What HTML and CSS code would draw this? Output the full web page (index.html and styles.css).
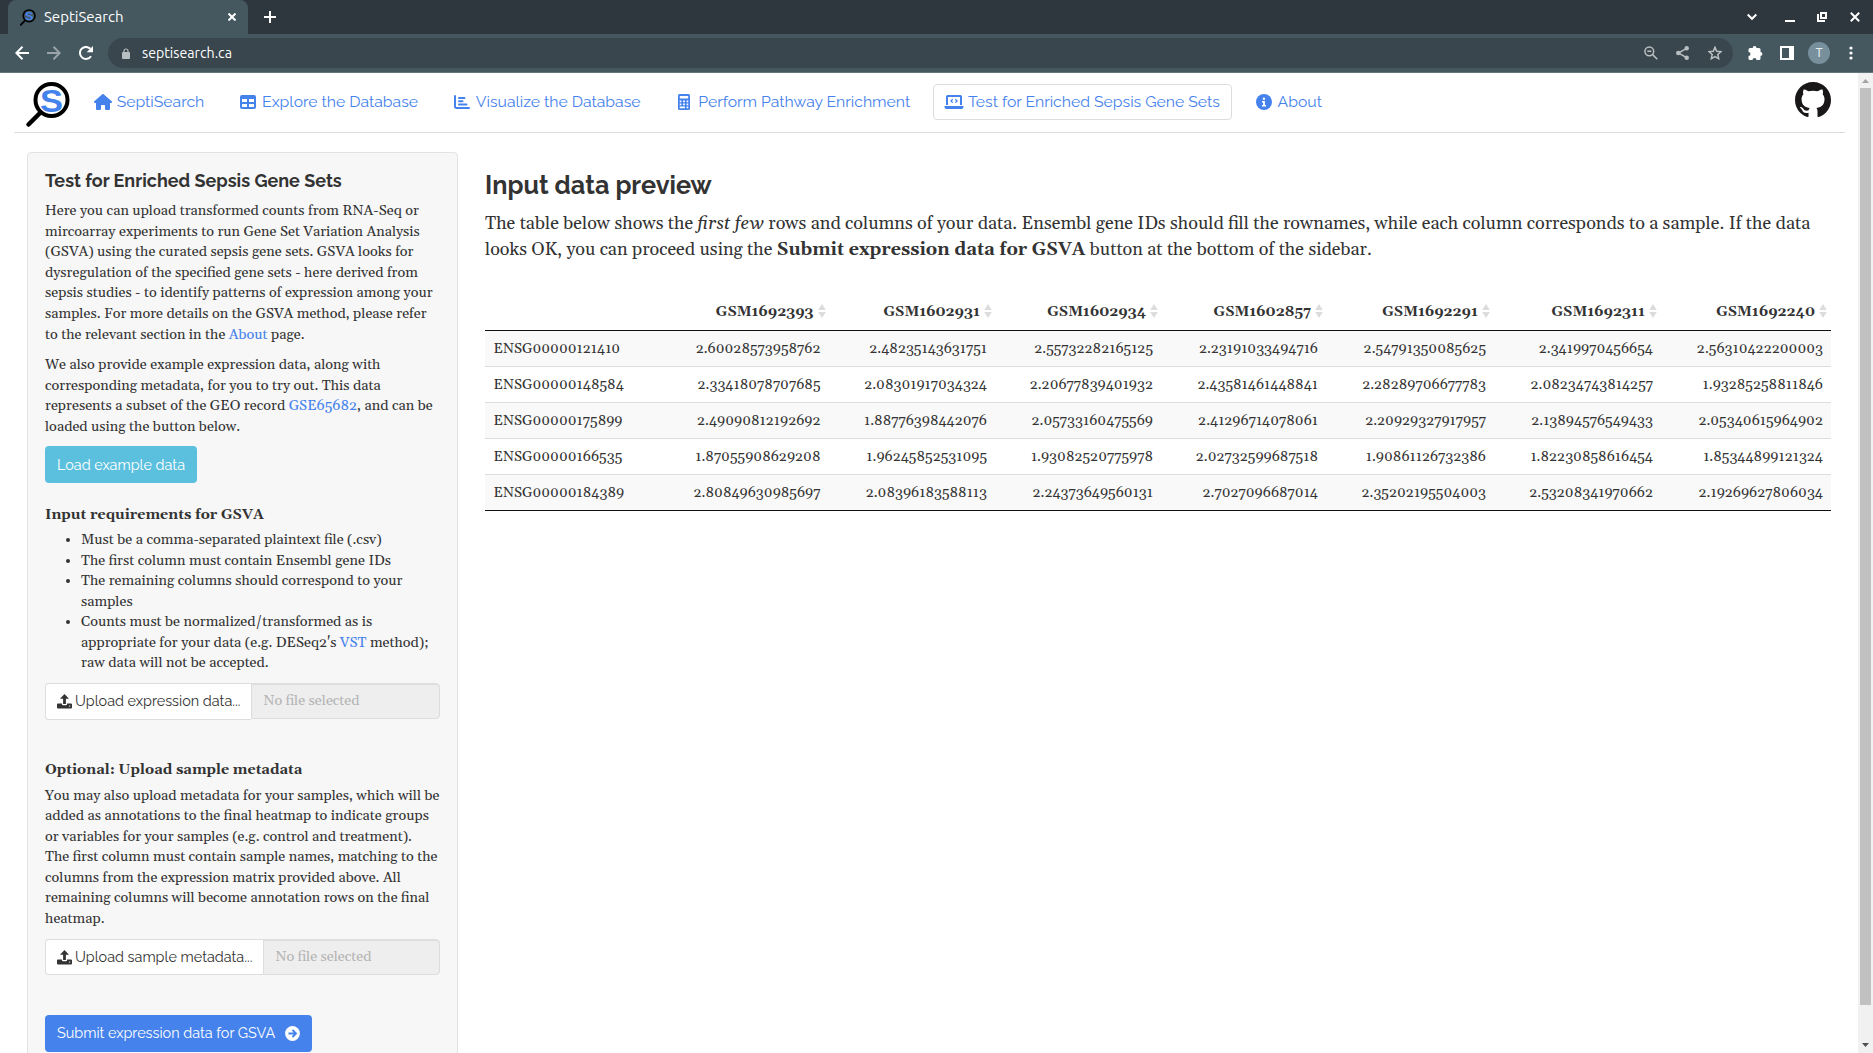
FILE: index.html
```html
<!DOCTYPE html>
<html lang="en">
<head>
<meta charset="utf-8">
<title>SeptiSearch</title>
<link rel="stylesheet" href="styles.css">
</head>
<body>
<svg class="defs" width="0" height="0">
  <symbol id="upload" viewBox="0 0 15 15">
    <path d="M7.500 0L12 4.700H8.900V10H6.100V4.700H3z"/>
    <path d="M1 9.500H5V10.200A1 1 0 0 0 6 11.200H9A1 1 0 0 0 10 10.200V9.500H14A1 1 0 0 1 15 10.500V13.500A1 1 0 0 1 14 14.500H1A1 1 0 0 1 0 13.500V10.500A1 1 0 0 1 1 9.500zM12.700 11.400A.7 .7 0 1 0 12.700 12.800A.7 .7 0 1 0 12.700 11.400z" fill-rule="evenodd"/>
  </symbol>
  <symbol id="sort" viewBox="0 0 8 14"><path d="M4 0L7.800 6H.2zM4 14L7.800 8H.2z" fill="#dcdcdc"/></symbol>
</svg>

<div class="tabstrip">
  <div class="tab">
    <svg class="favicon" width="16" height="17" viewBox="0 0 44 46">
      <path d="M13.500 31.500L2 43.500" stroke="#000" stroke-width="5" stroke-linecap="round"/>
      <circle cx="25" cy="18.500" r="16.200" fill="none" stroke="#000" stroke-width="4.500"/>
      <text x="25" y="30" text-anchor="middle" class="logo-letter" textLength="23" lengthAdjust="spacingAndGlyphs">S</text>
    </svg>
    <span class="tab-title">SeptiSearch</span>
    <svg class="tab-close" width="8" height="8" viewBox="0 0 8 8"><path d="M.5 .5L7.500 7.500M7.500 .5L.5 7.500"/></svg>
  </div>
  <svg class="new-tab" width="12" height="12" viewBox="0 0 12 12"><path d="M6 0V12M0 6H12"/></svg>
  <div class="window-controls">
    <svg width="10" height="10" viewBox="0 0 10 10"><path d="M.7 2.500L5 6.800L9.300 2.500"/></svg>
    <svg class="minimize" width="10" height="10" viewBox="0 0 10 10"><path d="M0 9H10"/></svg>
    <svg width="10" height="10" viewBox="0 0 10 10"><path d="M4 1H9V6H4zM1 2V9H8"/></svg>
    <svg width="10" height="10" viewBox="0 0 10 10"><path d="M.8 .8L9.200 9.200M9.200 .8L.8 9.200"/></svg>
  </div>
</div>

<div class="toolbar">
  <div class="nav-buttons">
    <svg width="14" height="14" viewBox="0 0 14 14"><path d="M14 7H1.500M7.500 .8L1.300 7L7.500 13.200"/></svg>
    <svg class="dim" width="14" height="14" viewBox="0 0 14 14"><path d="M0 7H12.500M6.500 .8L12.700 7L6.500 13.200"/></svg>
    <svg width="14" height="14" viewBox="0 0 14 14"><path d="M12 10.200A6 6 0 1 1 11.300 2.800"/><path d="M14 0V6.300H7.700z" class="solid"/></svg>
  </div>
  <div class="address">
    <svg width="8" height="11" viewBox="0 0 8 11"><path d="M2 5V3A2 2 0 0 1 6 3V5" fill="none" stroke="#b9bec1" stroke-width="1.200"/><rect y="4" width="8" height="7" rx="1" fill="#b9bec1"/></svg>
    <span class="url">septisearch.ca</span>
    <div class="address-actions">
      <svg class="zoom-out" width="14" height="14" viewBox="0 0 14 14"><circle cx="5.300" cy="5.300" r="4.400"/><path d="M8.600 8.600L13.300 13.300M3.300 5.300H7.300"/></svg>
      <svg width="13" height="14" viewBox="0 0 13 14"><path d="M10.500 2.300L2.500 7L10.500 11.700"/><circle cx="10.700" cy="2.300" r="1.500" class="dot"/><circle cx="2.300" cy="7" r="1.500" class="dot"/><circle cx="10.700" cy="11.700" r="1.500" class="dot"/></svg>
      <svg width="14" height="14" viewBox="0 0 14 14"><path d="M7 1.200L8.700 5.200L13 5.600L9.800 8.500L10.700 12.700L7 10.500L3.300 12.700L4.200 8.500L1 5.600L5.300 5.200z"/></svg>
    </div>
  </div>
  <div class="extensions">
    <svg width="15" height="15" viewBox="0 0 15 15" fill="#fff"><path d="M4.200 2.500A1.900 1.900 0 0 1 8 2.500H10.500A1.500 1.500 0 0 1 12 4V6.500A1.900 1.900 0 0 1 12 10.300V13A1.500 1.500 0 0 1 10.500 14.500H8A2 2 0 0 0 4 14.500H1.500A1.500 1.500 0 0 1 0 13V10.500A2 2 0 0 0 0 6.500V4A1.500 1.500 0 0 1 1.500 2.500z" transform="translate(.5 -.5)"/></svg>
    <svg width="14" height="14" viewBox="0 0 14 14" fill="#fff"><path d="M0 0H14V14H0zM2 2V12H9V2z" fill-rule="evenodd"/></svg>
    <span class="avatar">T</span>
    <svg width="4" height="14" viewBox="0 0 4 14" fill="#fff"><circle cx="2" cy="2" r="1.600"/><circle cx="2" cy="7" r="1.600"/><circle cx="2" cy="12" r="1.600"/></svg>
  </div>
</div>

<div class="viewport">
  <div class="page">
    <nav class="navbar">
      <svg class="brand" width="44" height="46" viewBox="0 0 44 46">
        <path d="M14 31L2.500 42.500" stroke="#000" stroke-width="4.500" stroke-linecap="round"/>
        <circle cx="25.500" cy="18" r="16" fill="#fff" stroke="#000" stroke-width="4"/>
        <text x="25.500" y="29.500" text-anchor="middle" class="logo-letter" textLength="23" lengthAdjust="spacingAndGlyphs">S</text>
      </svg>
      <a class="nav-item"><svg class="nav-icon" width="18" height="16" viewBox="0 0 576 512"><path d="M575.8 255.500c0 18-15 32.100-32 32.100h-32l.7 160.200c0 2.700-.2 5.400-.5 8.100V472c0 22.100-17.900 40-40 40H392c-22.100 0-40-17.900-40-40V384c0-17.700-14.300-32-32-32H256c-17.700 0-32 14.300-32 32v88c0 22.100-17.900 40-40 40H104c-22.100 0-40-17.900-40-40V287.600H32c-18 0-32-14-32-32.100c0-9 3-17 10-24L266.400 8c7-7 15-8 22-8s15 2 21 7L564.800 231.500c8 7 12 15 11 24z"/></svg><span>SeptiSearch</span></a>
      <a class="nav-item"><svg class="nav-icon" width="16" height="16" viewBox="0 0 16 16"><path d="M2 1H14A2 2 0 0 1 16 3V13A2 2 0 0 1 14 15H2A2 2 0 0 1 0 13V3A2 2 0 0 1 2 1zM2 5V8H7V5zM9 5V8H14V5zM2 10V13H7V10zM9 10V13H14V10z" fill-rule="evenodd"/></svg><span>Explore the Database</span></a>
      <a class="nav-item"><svg class="nav-icon" width="16" height="16" viewBox="0 0 16 16"><path d="M1 2V12.500A1.500 1.500 0 0 0 2.500 14H15M5 4H10.500M5 7.200H8.500M5 10.400H12.500" fill="none" stroke="#4582ec" stroke-width="2" stroke-linecap="round"/></svg><span>Visualize the Database</span></a>
      <a class="nav-item"><svg class="nav-icon" width="12" height="16" viewBox="0 0 12 16"><path d="M1.500 0H10.500A1.500 1.500 0 0 1 12 1.500V14.500A1.500 1.500 0 0 1 10.500 16H1.500A1.500 1.500 0 0 1 0 14.500V1.500A1.500 1.500 0 0 1 1.500 0zM1.800 2V4.600H10.200V2zM1.700 6.600V8.300H3.400V6.600zM5.100 6.600V8.300H6.900V6.600zM8.600 6.600V8.300H10.300V6.600zM1.700 9.600V11.300H3.400V9.600zM5.100 9.600V11.300H6.900V9.600zM8.600 9.600V11.300H10.300V9.600zM1.700 12.600V14.200H6.900V12.600zM8.600 12.600V14.200H10.300V12.600z" fill-rule="evenodd"/></svg><span>Perform Pathway Enrichment</span></a>
      <a class="nav-item active"><svg class="nav-icon" width="20" height="16" viewBox="0 0 20 16"><path d="M3 11V2.500A.8 .8 0 0 1 3.800 2H16.200A.8 .8 0 0 1 17 2.500V11" fill="none" stroke="#4582ec" stroke-width="2"/><path d="M.5 12H19.500V13A2 2 0 0 1 17.500 15H2.500A2 2 0 0 1 .5 13z"/><path d="M8.700 5.200L7 6.900L8.700 8.600M11.300 5.200L13 6.900L11.300 8.600" fill="none" stroke="#4582ec" stroke-width="1.300"/></svg><span>Test for Enriched Sepsis Gene Sets</span></a>
      <a class="nav-item"><svg class="nav-icon" width="16" height="16" viewBox="0 0 16 16"><circle cx="8" cy="8" r="8"/><circle cx="8" cy="4.800" r="1.200" fill="#fff"/><path d="M6 7H8.900V11H10V12.400H6V11H7.100V8.400H6z" fill="#fff"/></svg><span>About</span></a>
      <svg class="github" width="36" height="36" viewBox="0 0 16 16" fill="#191717"><path d="M8 0C3.580 0 0 3.580 0 8c0 3.540 2.290 6.530 5.470 7.590.4.070.55-.17.55-.38 0-.19-.01-.82-.01-1.490-2.010.37-2.530-.49-2.690-.94-.09-.23-.48-.94-.82-1.130-.28-.15-.68-.52-.01-.53.63-.01 1.080.58 1.230.82.72 1.210 1.870.87 2.330.66.07-.52.28-.87.51-1.070-1.780-.2-3.640-.89-3.640-3.950 0-.87.31-1.590.82-2.150-.08-.2-.36-1.020.08-2.120 0 0 .67-.21 2.200.82.64-.18 1.320-.27 2-.27s1.360.09 2 .27c1.530-1.040 2.200-.82 2.200-.82.44 1.100.16 1.920.08 2.120.51.56.82 1.270.82 2.150 0 3.070-1.870 3.750-3.650 3.950.29.25.54.73.54 1.480 0 1.070-.01 1.930-.01 2.200 0 .21.15.46.55.38A8.010 8.010 0 0 0 16 8c0-4.420-3.580-8-8-8z"/></svg>
    </nav>

    <div class="layout">
      <aside class="sidebar">
        <h4>Test for Enriched Sepsis Gene Sets</h4>
        <p>Here you can upload transformed counts from RNA-Seq or mircoarray experiments to run Gene Set Variation Analysis (GSVA) using the curated sepsis gene sets. GSVA looks for dysregulation of the specified gene sets - here derived from sepsis studies - to identify patterns of expression among your samples. For more details on the GSVA method, please refer to the relevant section in the <a>About</a> page.</p>
        <p>We also provide example expression data, along with corresponding metadata, for you to try out. This data represents a subset of the GEO record <a>GSE65682</a>, and can be loaded using the button below.</p>
        <button class="btn btn-info">Load example data</button>
        <div class="field-title">Input requirements for GSVA</div>
        <ul>
          <li>Must be a comma-separated plaintext file (.csv)</li>
          <li>The first column must contain Ensembl gene IDs</li>
          <li>The remaining columns should correspond to your samples</li>
          <li>Counts must be normalized/transformed as is appropriate for your data (e.g. DESeq2's <a>VST</a> method); raw data will not be accepted.</li>
        </ul>
        <div class="upload">
          <span class="upload-btn"><svg width="15" height="15"><use href="#upload"/></svg>Upload expression data...</span>
          <span class="upload-file">No file selected</span>
        </div>
        <div class="field-title">Optional: Upload sample metadata</div>
        <p class="metadata-help">You may also upload metadata for your samples, which will be added as annotations to the final heatmap to indicate groups or variables for your samples (e.g. control and treatment).<br>The first column must contain sample names, matching to the columns from the expression matrix provided above. All remaining columns will become annotation rows on the final heatmap.</p>
        <div class="upload">
          <span class="upload-btn"><svg width="15" height="15"><use href="#upload"/></svg>Upload sample metadata...</span>
          <span class="upload-file">No file selected</span>
        </div>
        <button class="btn btn-primary">Submit expression data for GSVA<svg width="15" height="15" viewBox="0 0 15 15"><circle cx="7.500" cy="7.500" r="7.400" fill="#fff"/><path d="M3.500 7.500H10.500M7.500 4L11 7.500L7.500 11" fill="none" stroke="#4582ec" stroke-width="1.900"/></svg></button>
      </aside>

      <main class="main">
        <h2>Input data preview</h2>
        <p>The table below shows the <em>first few</em> rows and columns of your data. Ensembl gene IDs should fill the rownames, while each column corresponds to a sample. If the data looks OK, you can proceed using the <strong>Submit expression data for GSVA</strong> button at the bottom of the sidebar.</p>
        <table>
          <colgroup><col class="c0"><col class="c1"><col class="c2"><col class="c3"><col class="c4"><col class="c5"><col class="c6"><col class="c7"></colgroup>
          <thead><tr><th></th>
            <th>GSM1692393<svg width="8" height="14"><use href="#sort"/></svg></th>
            <th>GSM1602931<svg width="8" height="14"><use href="#sort"/></svg></th>
            <th>GSM1602934<svg width="8" height="14"><use href="#sort"/></svg></th>
            <th>GSM1602857<svg width="8" height="14"><use href="#sort"/></svg></th>
            <th>GSM1692291<svg width="8" height="14"><use href="#sort"/></svg></th>
            <th>GSM1692311<svg width="8" height="14"><use href="#sort"/></svg></th>
            <th>GSM1692240<svg width="8" height="14"><use href="#sort"/></svg></th>
          </tr></thead>
          <tbody>
            <tr><td>ENSG00000121410</td><td>2.60028573958762</td><td>2.48235143631751</td><td>2.55732282165125</td><td>2.23191033494716</td><td>2.54791350085625</td><td>2.3419970456654</td><td>2.56310422200003</td></tr>
            <tr><td>ENSG00000148584</td><td>2.33418078707685</td><td>2.08301917034324</td><td>2.20677839401932</td><td>2.43581461448841</td><td>2.28289706677783</td><td>2.08234743814257</td><td>1.93285258811846</td></tr>
            <tr><td>ENSG00000175899</td><td>2.49090812192692</td><td>1.88776398442076</td><td>2.05733160475569</td><td>2.41296714078061</td><td>2.20929327917957</td><td>2.13894576549433</td><td>2.05340615964902</td></tr>
            <tr><td>ENSG00000166535</td><td>1.87055908629208</td><td>1.96245852531095</td><td>1.93082520775978</td><td>2.02732599687518</td><td>1.90861126732386</td><td>1.82230858616454</td><td>1.85344899121324</td></tr>
            <tr><td>ENSG00000184389</td><td>2.80849630985697</td><td>2.08396183588113</td><td>2.24373649560131</td><td>2.7027096687014</td><td>2.35202195504003</td><td>2.53208341970662</td><td>2.19269627806034</td></tr>
          </tbody>
        </table>
      </main>
    </div>
  </div>
  <div class="scrollbar">
    <svg width="7" height="4" viewBox="0 0 7 4"><path d="M3.500 0L7 4H0z" fill="#a3a3a3"/></svg>
    <div class="thumb"></div>
    <svg width="7" height="4" viewBox="0 0 7 4"><path d="M3.500 4L7 0H0z" fill="#505050"/></svg>
  </div>
</div>
</body>
</html>
```
FILE: styles.css
```css
* { box-sizing: border-box; }
body {
  margin: 0;
  height: 1053px;
  overflow: hidden;
  display: flex;
  flex-direction: column;
  background: #fff;
  color: #333;
  font: 14.4px/20.57px Gelasio, Georgia, "Liberation Serif", serif;
  font-variant-numeric: oldstyle-nums;
}
svg { flex: none; display: block; }
.defs { position: absolute; }
a { color: #4582ec; text-decoration: none; }
.logo-letter { font: bold 32px "Liberation Sans", sans-serif; fill: #4582ec; }

/* Browser window */
.tabstrip {
  flex: none;
  height: 34px;
  display: flex;
  align-items: center;
  background: #2d373d;
  padding: 0 13px 0 8px;
}
.tab {
  width: 240px;
  height: 34px;
  display: flex;
  align-items: center;
  padding: 0 12px;
  background: #455860;
  border-radius: 8px 8px 0 0;
  color: #fff;
  font: 15px/34px Ubuntu, "Noto Sans", sans-serif;
}
.tab-title { margin-left: 8px; flex: 1; }
.tab-close, .new-tab, .window-controls svg { fill: none; stroke: #fff; stroke-width: 2; }
.new-tab { margin-left: 16px; }
.window-controls { margin-left: auto; display: flex; gap: 23px; }
.window-controls svg:first-child { margin-right: 5px; }
.window-controls .minimize { margin-right: -1px; }
.toolbar {
  flex: none;
  height: 39px;
  display: flex;
  align-items: center;
  background: #455860;
  border-bottom: 1px solid #64757d;
  padding: 0 20px 0 15px;
}
.nav-buttons { display: flex; gap: 18px; fill: none; stroke: #fff; stroke-width: 2; }
.dim { opacity: .45; }
.solid { fill: #fff; stroke: none; }
.address {
  flex: 1;
  height: 30px;
  margin-left: 15px;
  padding: 0 11px 0 14px;
  display: flex;
  align-items: center;
  border-radius: 15px;
  background: #3a464d;
}
.url { flex: 1; margin-left: 12px; color: #fff; font: 14.2px/30px Ubuntu, "Noto Sans", sans-serif; }
.address-actions { display: flex; gap: 19px; fill: none; stroke: #b9bec1; stroke-width: 1.5; }
.zoom-out { margin-right: -1px; }
.dot { fill: #b9bec1; }
.extensions { display: flex; align-items: center; gap: 17px; margin-left: 15px; }
.avatar {
  width: 22px;
  height: 22px;
  border-radius: 50%;
  margin: 0 2px 0 -3px;
  background: #78909c;
  color: #e4eaed;
  text-align: center;
  font: 12px/22px Roboto, sans-serif;
}

.viewport { flex: 1; min-height: 0; display: flex; }
.scrollbar {
  width: 15px;
  display: flex;
  flex-direction: column;
  align-items: center;
  padding: 6px 0 6px;
  background: #f1f1f1;
}
.thumb { width: 11px; height: 917px; margin: 5px 0 auto; background: #c1c1c1; }

/* Application */
.page { flex: 1; padding: 0 13px 0 14px; overflow: hidden; }
.navbar {
  height: 60px;
  display: flex;
  align-items: flex-start;
  padding: 9px 14px 0 12px;
  border-bottom: 1px solid #ddd;
}
.brand { margin-right: 11.700px; overflow: visible; }
.nav-item {
  height: 36px;
  margin: 2px 10.800px 0 0;
  padding: 0 11px 0 10px;
  display: flex;
  align-items: center;
  border: 1px solid transparent;
  border-radius: 4px;
  white-space: nowrap;
  font: 15.75px/34px Raleway, Lato, sans-serif;
}
.nav-item span { margin-left: 4px; }
.nav-item.active { border-color: #ddd; }
.nav-icon { box-sizing: content-box; fill: #4582ec; padding: 0 2px; }
.nav-icon[width="18"] { padding: 0 1px; }
.nav-icon[width="12"] { padding: 0 4px; }
.nav-icon[width="20"] { padding: 0; }
.github { margin-left: auto; }

.layout { display: flex; align-items: flex-start; padding: 19px 14px 0 13px; }
.sidebar {
  width: 431px;
  flex: none;
  padding: 18px 17px;
  border: 1px solid #e3e3e3;
  border-radius: 4px;
  background: #f7f7f7;
}
h2, h4 { margin: 0; font-family: Raleway, Lato, sans-serif; font-weight: 700; }
h4 { font-size: 18px; line-height: 20px; margin-bottom: 10.200px; }
p { margin: 0 0 10px; }
.btn {
  display: flex;
  align-items: center;
  height: 37px;
  padding: 0 12px;
  border: 0;
  border-radius: 4px;
  color: #fff;
  font: 14.4px/36px Raleway, Lato, sans-serif;
}
.btn svg { margin-left: 10px; }
.btn-info { background: #5bc0de; margin: -1.200px 0 21.800px; }
.btn-primary { background: #4582ec; margin-top: 39.700px; padding-bottom: 1px; }
.field-title { font-weight: 700; margin-bottom: 4.500px; }
ul { margin: 0 0 9px; padding: 0 0 0 36px; }
.upload { display: flex; align-items: flex-start; height: 36.570px; }
.upload + .field-title { margin: 40.400px 0 5.100px; }
.metadata-help { margin-bottom: 9.400px; }
.upload-btn {
  display: flex;
  align-items: center;
  height: 36.570px;
  padding: 0 11px;
  border: 1px solid #ddd;
  border-right: 0;
  border-radius: 4px 0 0 4px;
  background: #fff;
  font: 14.4px/34px Raleway, Lato, sans-serif;
}
.upload-btn svg { margin-right: 3px; fill: #333; }
.upload-file {
  flex: 1;
  height: 36px;
  padding-left: 11px;
  border: 1px solid #ddd;
  border-radius: 0 4px 4px 0;
  background: #eee;
  box-shadow: inset 0 1px 1px rgba(0, 0, 0, .075);
  color: #b4b4b4;
  line-height: 35px;
}

.main { flex: 1; padding: 19px 0 0 27px; }
h2 { font-size: 25.200px; line-height: 28px; margin-bottom: 11.800px; }
.main p { font-size: 18px; line-height: 25.700px; margin-bottom: 30.800px; }
table { width: 1346px; table-layout: fixed; border-collapse: separate; border-spacing: 0; }
th { height: 38px; padding: 1px 3px 0 0; border-bottom: 1px solid #111; text-align: right; white-space: nowrap; }
th:nth-child(n+6) { padding-right: 4px; }
th svg { display: inline-block; vertical-align: -2px; margin-left: 4px; }
td { height: 36px; padding: 2px 8px 0; border-bottom: 1px solid #ddd; text-align: right; }
td:first-child { text-align: left; padding-left: 8.500px; }
tbody tr:nth-child(odd) td { background: #f9f9f9; }
tbody tr:last-child td { border-bottom-color: #111; }
.c0 { width: 177px; }
.c1 { width: 166.500px; }
.c2 { width: 166.500px; }
.c3 { width: 166px; }
.c4 { width: 165px; }
.c5 { width: 168px; }
.c6 { width: 167px; }
.c7 { width: 170px; }
```
